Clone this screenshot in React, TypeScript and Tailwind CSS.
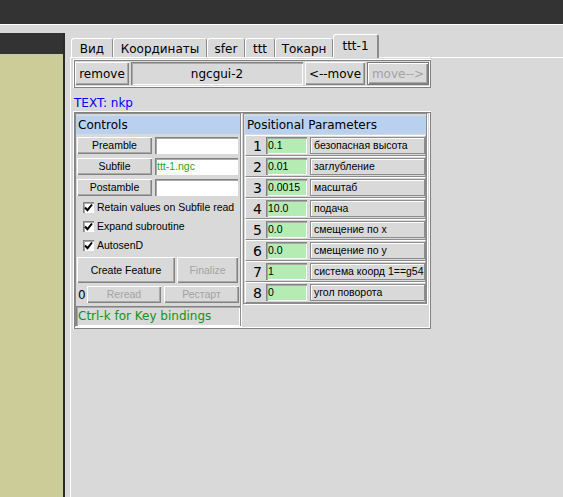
import React from "react";

const RAISED =
  "shadow-[inset_1px_1px_0_#ffffff,inset_-1px_-1px_0_#828282,inset_-2px_-2px_0_#a9a9a9]";
const SUNKEN =
  "shadow-[inset_1px_1px_0_#828282,inset_2px_2px_0_#a9a9a9,inset_-1px_-1px_0_#ffffff]";
const RIDGE =
  "shadow-[inset_1px_1px_0_#ffffff,inset_-1px_-1px_0_#828282,inset_2px_2px_0_#828282,inset_-2px_-2px_0_#ffffff]";

const SMALL = "font-['Liberation_Sans',Arial,sans-serif] text-[10.5px]";

function Btn({
  children,
  className,
  disabled = false,
}: {
  children: React.ReactNode;
  className: string;
  disabled?: boolean;
}) {
  return (
    <div
      className={`flex items-center justify-center bg-[#d9d9d9] ${RAISED} ${
        disabled ? "text-[#a3a3a3]" : "text-black"
      } ${className}`}
    >
      {children}
    </div>
  );
}

function Tab({
  label,
  className,
  selected = false,
}: {
  label: string;
  className: string;
  selected?: boolean;
}) {
  if (selected) {
    return (
      <div
        className={`relative z-10 -mb-px h-[24px] flex items-center justify-center pb-[2px] bg-[#d9d9d9] border-t border-l border-white border-r-2 border-r-[#8c8c8c] rounded-t-[3px] ${className}`}
      >
        {label}
      </div>
    );
  }
  return (
    <div
      className={`h-[19px] flex items-center justify-center pt-[2px] bg-[#d9d9d9] border-t border-l border-white border-r border-r-[#8c8c8c] rounded-t-[3px] ${className}`}
    >
      {label}
    </div>
  );
}

function Check({ label }: { label: string }) {
  return (
    <div className="h-[19px] flex items-center pl-[7px]">
      <div className={`w-[11px] h-[11px] bg-white flex items-center justify-center ${SUNKEN}`}>
        <svg width="9" height="9" viewBox="0 0 9 9">
          <path d="M1 4.5 L3.5 7.2 L8 1.5" fill="none" stroke="#000" strokeWidth="2" />
        </svg>
      </div>
      <span className={`ml-[3px] ${SMALL}`}>{label}</span>
    </div>
  );
}

const params = [
  ["1", "0.1", "безопасная высота"],
  ["2", "0.01", "заглубление"],
  ["3", "0.0015", "масштаб"],
  ["4", "10.0", "подача"],
  ["5", "0.0", "смещение по x"],
  ["6", "0.0", "смещение по y"],
  ["7", "1", "система коорд 1==g54"],
  ["8", "0", "угол поворота"],
];

export default function App() {
  return (
    <div className="w-[563px] h-[497px] bg-[#d9d9d9] overflow-hidden flex flex-col font-['DejaVu_Sans',sans-serif] text-[12px] text-black leading-none">
      <div className="h-[24px] shrink-0 bg-[#333333]" />
      <div className="h-px shrink-0 bg-white" />
      <div className="flex flex-1 min-h-0">
        {/* left strip */}
        <div className="w-[65px] shrink-0 pt-[8px] flex flex-col">
          <div className="flex-1 flex flex-col border-r-2 border-[#2b2b2b]">
            <div className="h-[21px] bg-[#333333]" />
            <div className="flex-1 bg-[#cccc99]" />
          </div>
        </div>
        {/* notebook */}
        <div className="flex-1 pl-[5px] pt-[8px] flex flex-col">
          <div className="h-[24px] flex items-end pl-px">
            <Tab label="Вид" className="w-[42px]" />
            <Tab label="Координаты" className="w-[94px]" />
            <Tab label="sfer" className="w-[38px]" />
            <Tab label="ttt" className="w-[30px]" />
            <Tab label="Токарн" className="w-[58px]" />
            <Tab label="ttt-1" className="w-[46px]" selected />
          </div>
          <div className="flex-1 border-t border-l border-white pl-[2px] pt-px">
            {/* top row */}
            <div className={`w-[358px] h-[29px] flex items-center pl-[2px] gap-[2px] ${RIDGE}`}>
              <Btn className="w-[54px] h-[23px]">remove</Btn>
              <div className={`w-[172px] h-[23px] flex items-center justify-center ${SUNKEN}`}>
                ngcgui-2
              </div>
              <Btn className="w-[60px] h-[23px]">&lt;--move</Btn>
              <div className="w-[62px] h-[23px] border border-[#7a7a7a] flex">
                <Btn className="flex-1" disabled>
                  move--&gt;
                </Btn>
              </div>
            </div>
            <div className="h-[23px] flex items-end pb-[2px] pl-px text-[#0000ff]">TEXT: nkp</div>

            {/* main frame */}
            <div className={`w-[358px] h-[218px] p-[2px] flex items-start gap-px ${RIDGE}`}>
              {/* Controls */}
              <div className="w-[167px] h-[214px] border border-t-[#8c8c8c] border-l-[#8c8c8c] border-b-white border-r-white shadow-[inset_-1px_-1px_0_#8c8c8c] flex flex-col">
                <div className="pt-[2px]">
                  <div className="h-[18px] bg-[#b9d1ef] flex items-center pl-[2px] mr-px">Controls</div>
                </div>
                <div className="mt-[3px] flex flex-col gap-[4px]">
                  {[
                    ["Preamble", ""],
                    ["Subfile", "ttt-1.ngc"],
                    ["Postamble", ""],
                  ].map(([b, v]) => (
                    <div key={b} className="h-[17px] flex pl-px">
                      <Btn className={`w-[75px] h-[17px] ${SMALL}`}>{b}</Btn>
                      <div
                        className={`ml-[3px] w-[83px] h-[17px] bg-white flex items-center pl-[2px] text-[#22a822] ${SMALL} ${SUNKEN}`}
                      >
                        {v}
                      </div>
                    </div>
                  ))}
                </div>
                <div className="mt-[2px] flex flex-col">
                  <Check label="Retain values on Subfile read" />
                  <Check label="Expand subroutine" />
                  <Check label="AutosenD" />
                </div>
                <div className="mt-[2px] h-[26px] flex pl-px">
                  <Btn className={`w-[98px] h-[26px] ${SMALL}`}>Create Feature</Btn>
                  <Btn className={`ml-[2px] w-[61px] h-[26px] ${SMALL}`} disabled>
                    Finalize
                  </Btn>
                </div>
                <div className="mt-[3px] h-[17px] flex items-center pl-[2px]">
                  <span className="w-[9px]">0</span>
                  <Btn className={`w-[74px] h-[17px] ${SMALL}`} disabled>
                    Reread
                  </Btn>
                  <Btn className={`ml-[3px] w-[75px] h-[17px] ${SMALL}`} disabled>
                    Рестарт
                  </Btn>
                </div>
                <div
                  className={`mt-[3px] mr-px h-[20px] flex items-center pl-[2px] text-[12px] text-[#129412] ${SUNKEN}`}
                >
                  Ctrl-k for Key bindings
                </div>
              </div>

              {/* Positional parameters */}
              <div className="w-[185px] h-[192px] border border-t-[#8c8c8c] border-l-[#8c8c8c] border-b-white border-r-white shadow-[inset_-1px_-1px_0_#8c8c8c] flex flex-col px-px">
                <div className="pt-[2px]">
                  <div className="h-[18px] bg-[#b9d1ef] flex items-center pl-[2px]">
                    Positional Parameters
                  </div>
                </div>
                <div className="mt-px flex flex-col">
                  {params.map(([n, v, l]) => (
                    <div
                      key={n}
                      className="h-[21px] flex items-center border border-t-white border-l-white border-b-[#8c8c8c] border-r-[#8c8c8c]"
                    >
                      <div className="w-[19px] h-[17px] flex items-center justify-end pr-[3px] text-[14px]">
                        {n}
                      </div>
                      <div
                        className={`ml-px w-[41px] h-[17px] bg-[#b4ecb4] flex items-center pl-[2px] ${SMALL} ${SUNKEN}`}
                      >
                        {v}
                      </div>
                      <div
                        className={`ml-[3px] w-[115px] h-[17px] flex items-center pl-[3px] whitespace-nowrap overflow-hidden border border-[#8c8c8c] shadow-[inset_1px_1px_0_#ffffff] ${SMALL}`}
                      >
                        {l}
                      </div>
                    </div>
                  ))}
                </div>
              </div>
            </div>
          </div>
        </div>
      </div>
    </div>
  );
}
